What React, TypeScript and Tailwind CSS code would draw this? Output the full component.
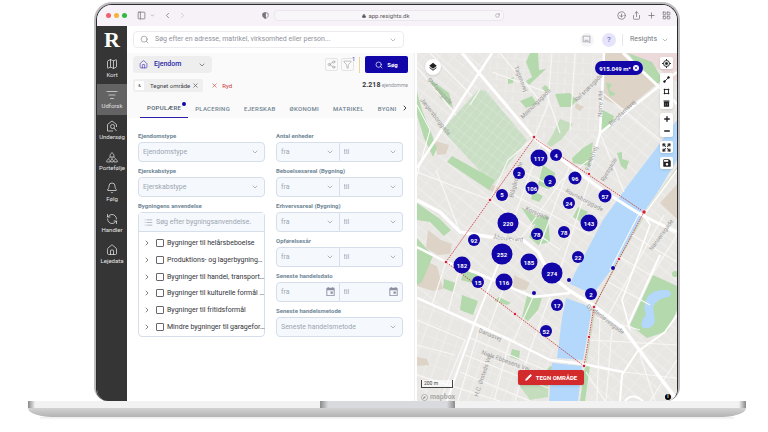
import type { ReactNode } from "react";
import {
  Bell, ChevronDown, ChevronLeft, ChevronRight, CircleArrowDown, Expand, Funnel, House, LayoutGrid, List,
  ListFilter, Lock, Map, Minus, PanelLeft, Pencil, Plus,
  RefreshCcw, RotateCw, Search, Share, Share2, X,
} from "lucide-react";

const FindHouseIcon = () => (
  <svg viewBox="0 0 24 24" className="size-3" fill="none" stroke="currentColor" strokeWidth="1.500">
    <path d="M21 14V9l-9-7-9 7v13h11" />
    <circle cx="13" cy="13" r="4" />
    <path d="M16 16l5 6" />
  </svg>
);

const PortfolioIcon = () => (
  <svg viewBox="0 0 24 24" className="size-3" fill="none" stroke="currentColor" strokeWidth="1.300">
    <path d="M8 8l4-5 4 5v4H8zM12 12v4M9 12l-4 3M15 12l4 3" />
    <path d="M1.500 22v-3L5 16l3 3v3zM9.500 22v-3l2.500-3 2.500 3v3zM16 22v-3l3-3 3.500 3v3z" />
  </svg>
);

const thin = { className: "size-3", strokeWidth: 1.5 };

const navItems = [
  { label: "Kort", icon: <Map {...thin} /> },
  { label: "Udforsk", icon: <ListFilter {...thin} />, active: true },
  { label: "Undersøg", icon: <FindHouseIcon /> },
  { label: "Portefølje", icon: <PortfolioIcon /> },
  { label: "Følg", icon: <Bell {...thin} /> },
  { label: "Handler", icon: <RefreshCcw {...thin} /> },
  { label: "Lejedata", icon: <House {...thin} /> },
];

const tabs = ["POPULÆRE", "PLACERING", "EJERSKAB", "ØKONOMI", "MATRIKEL", "BYGNI"];

const ranges = ["Antal enheder", "Beboelsesareal (Bygning)", "Erhvervsareal (Bygning)", "Opførelsesår"];

const usages = [
  "Bygninger til helårsbeboelse",
  "Produktions- og lagerbygning…",
  "Bygninger til handel, transport…",
  "Bygninger til kulturelle formål …",
  "Bygninger til fritidsformål",
  "Mindre bygninger til garagefor…",
];

// x, y in map units (260 x 348), diameter, count
const clusters: [number, number, number, string][] = [
  [122, 105, 17, "117"], [139, 102, 12, "4"], [102, 120, 12, "2"], [133, 128, 12, "2"],
  [158, 125, 13, "96"], [115, 135, 13, "106"], [85, 142, 12, "5"], [188, 143, 13, "57"],
  [152, 150, 12, "24"], [91, 170, 21, "220"], [172, 170, 17, "143"], [57, 187, 12, "92"],
  [120, 181, 12, "78"], [147, 179, 12, "78"], [85, 201, 21, "252"], [112, 209, 17, "185"],
  [45, 212, 17, "182"], [161, 204, 12, "22"], [135, 220, 21, "274"], [61, 229, 12, "15"],
  [87, 229, 17, "116"], [140, 252, 12, "17"], [174, 241, 12, "2"], [129, 278, 12, "52"],
  [152, 227, 4, ""], [117, 240, 4, ""], [196, 215, 4, ""],
];

const Label = ({ id, children }: { id: string; children: string }) => (
  <label htmlFor={id} className="mb-px block text-[6px] font-bold leading-[10px] text-[#6f8797]">{children}</label>
);

const Drop = ({ id, text, label, className = "" }: { id: string; text: string; label?: string; className?: string }) => (
  <div className="relative flex-1">
    <select id={id} aria-label={label} className={`block h-5 w-full appearance-none border border-[#d5dee9] bg-[#f5f9fd] px-1 text-[7px] text-[#9ca5b1] ${className}`}>
      <option>{text}</option>
    </select>
    <ChevronDown className="pointer-events-none absolute right-1.5 top-1.5 size-2 text-[#8795a5]" />
  </div>
);

const CalendarIcon = () => (
  <svg viewBox="0 0 24 24" className="pointer-events-none absolute right-1 top-1 size-[11px]" fill="#8b8fa0">
    <path d="M19 4h-1V2h-2v2H8V2H6v2H5a2 2 0 0 0-2 2v14a2 2 0 0 0 2 2h14a2 2 0 0 0 2-2V6a2 2 0 0 0-2-2zm0 16H5V9h14zM12 12h5v5h-5z" />
  </svg>
);

const DateBox = ({ id, text, label, className = "" }: { id: string; text: string; label?: string; className?: string }) => (
  <div className="relative flex-1">
    <input id={id} aria-label={label} placeholder={text} className={`block h-5 w-full border border-[#d5dee9] bg-[#f5f9fd] px-1 text-[7px] placeholder:text-[#9ca5b1] ${className}`} />
    <CalendarIcon />
  </div>
);

const BrowserBar = () => (
  <div className="flex h-[21px] items-center bg-[#f6f2f8] pl-[9px] pr-1.5 text-[#77727b]">
    <div className="flex flex-1 items-center">
      <div className="flex gap-[3px]">
        <span className="size-[5px] rounded-full bg-[#f0626a]" />
        <span className="size-[5px] rounded-full bg-[#f2b53b]" />
        <span className="size-[5px] rounded-full bg-[#31b943]" />
      </div>
      <PanelLeft className="ml-2.5 size-[9px]" />
      <ChevronDown className="ml-1 size-[5px]" />
      <ChevronLeft className="ml-2 size-[9px]" />
      <ChevronRight className="ml-1.5 size-[9px] opacity-40" />
      <svg viewBox="0 0 24 24" className="ml-auto mr-[5px] size-[7px]" fill="none" stroke="currentColor" strokeWidth="2.500">
        <path d="M12 2l9 3v7c0 5-4 8-9 10-5-2-9-5-9-10V5z" />
        <path d="M12 2v20c-5-2-9-5-9-10V5z" fill="currentColor" />
      </svg>
    </div>
    <div className="flex h-[11px] w-[230px] items-center rounded-sm border border-[#ebe6ed] bg-[#f9f6fa] px-[3px]">
      <p className="flex flex-1 items-center justify-center gap-0.5 text-[6px] text-[#5b5660]">
        <Lock className="size-1" fill="currentColor" />
        app.resights.dk
      </p>
      <RotateCw className="size-[5px]" />
    </div>
    <div className="flex flex-1 justify-end gap-1.5">
      <CircleArrowDown className="size-[9px]" />
      <Share className="size-[9px]" />
      <Plus className="size-[9px]" />
      <LayoutGrid className="size-[9px]" />
    </div>
  </div>
);

const Sidebar = () => (
  <nav className="w-[30px] shrink-0 bg-[#353535] text-white">
    <div className="flex h-[27px] items-center justify-center font-['Liberation_Serif'] text-[22px] font-bold">R</div>
    {navItems.map((item) => (
      <a
        key={item.label}
        href="#"
        className={`flex h-[31px] flex-col items-center pt-[5px] text-[6px] leading-[10px] ${item.active ? "bg-[#636363] text-[#e0e0e0]" : "text-[#e6e6e6]"}`}
      >
        {item.icon}
        {item.label}
      </a>
    ))}
  </nav>
);

const TopBar = () => (
  <header className="flex h-[27px] items-center bg-white pl-1.5 pr-2">
    <label className="flex h-[17px] w-[271px] items-center rounded-sm border border-[#ececee] px-1.5">
      <Search className="size-[9px] text-[#74747c]" strokeWidth={1.5} />
      <input aria-label="Søg" placeholder="Søg efter en adresse, matrikel, virksomhed eller person..." className="ml-1.5 flex-1 text-[7px] outline-none placeholder:text-[#8f939c]" />
      <ChevronDown className="size-2 text-[#9b9ba3]" />
    </label>
    <button className="ml-auto flex size-3.5 items-center justify-center rounded-full bg-[#f5f5f7] text-[#9696a2]" aria-label="Beskeder">
      <svg viewBox="0 0 24 24" className="size-[9px]" fill="none" stroke="currentColor" strokeWidth="2">
        <path d="M3 3h18v18l-3-3H3zM7 14h10" />
      </svg>
    </button>
    <button className="ml-2 flex size-3.5 items-center justify-center rounded-full bg-[#e6e4fb] text-[8px] text-[#5a53b8]">?</button>
    <span className="ml-1.5 h-3 w-px bg-[#e8e8ea]" />
    <button className="ml-[7px] flex items-center gap-1 text-[7px] text-[#77777f]">
      Resights
      <ChevronDown className="size-2 text-[#9b9ba3]" />
    </button>
  </header>
);

const FilterHead = () => (
  <div className="h-[65px] bg-[#fafafb] px-1.5 pt-[3px]">
    <div className="flex h-[17px] items-center">
      <button className="flex h-[17px] w-[79px] items-center rounded-sm bg-[#eeeeef] px-1.5 text-[7px] font-medium text-[#2a1fa8]">
        <House className="mr-1.5 size-[9px]" strokeWidth={1.5} />
        Ejendom
        <ChevronDown className="ml-auto size-2 text-[#555]" />
      </button>
      <button aria-label="Del" className="ml-auto flex size-[13px] items-center justify-center rounded-xs border border-[#e4e4e6] text-[#96969c]">
        <Share2 className="size-[9px]" strokeWidth={1.5} />
      </button>
      <button aria-label="Filtre" className="relative ml-[3px] flex size-[13px] items-center justify-center rounded-xs border border-[#e4e4e6] text-[#96969c]">
        <Funnel className="size-[9px]" strokeWidth={1.5} />
        <span className="absolute -right-0.5 -top-0.5 text-[5px] leading-[5px] text-[#3a30b0]">1</span>
      </button>
      <span className="mx-[5px] h-4 w-px bg-[#f0d590]" />
      <button className="flex h-[17px] w-[43px] items-center justify-center gap-1 rounded-xs bg-[#1206a9] text-[6px] font-bold text-white">
        <Search className="size-2" />
        Søg
      </button>
    </div>
    <div className="mt-1.5 flex h-[13px] items-center text-[6px]">
      <button className="flex h-[13px] items-center rounded-xs bg-[#efeff0] px-0.5 text-[#44444a]">
        <span className="mr-1.5 flex size-[9px] items-center justify-center bg-white text-[4px]">&amp;</span>
        Tegnet område
        <X className="mx-0.5 size-[7px]" />
      </button>
      <button className="ml-2 flex items-center gap-1 text-[#cc3333]">
        <X className="size-[7px]" />
        Ryd
      </button>
      <p className="ml-auto text-[5px] text-[#90909a]">
        <b className="text-[7px] text-[#36363c]">2.218</b> ejendomme
      </p>
    </div>
    <div role="tablist" className="mt-1.5 flex h-5 items-center gap-3.5 pl-3.5 text-[6px] font-medium tracking-wider text-[#71838f]">
      {tabs.map((tab, i) =>
        i === 0 ? (
          <button key={tab} role="tab" aria-selected className="relative -mx-[7px] h-5 border-b border-[#2a1fa8] px-[7px] text-[#4f5f6b]">
            {tab}
            <span className="absolute right-0.5 top-1 size-1 rounded-full bg-[#1206a9]" />
          </button>
        ) : (
          <button key={tab} role="tab" aria-selected={false}>{tab}</button>
        )
      )}
      <ChevronRight className="-ml-2.5 size-2 shrink-0 text-[#444]" strokeWidth={3} />
    </div>
  </div>
);

const FilterForm = () => (
  <form className="grid grid-cols-2 gap-x-[11px] px-[11px] pb-4 pt-[13px]">
    <div className="flex flex-col gap-1">
      <div>
        <Label id="type">Ejendomstype</Label>
        <Drop id="type" text="Ejendomstype" className="rounded-sm" />
      </div>
      <div>
        <Label id="owner">Ejerskabstype</Label>
        <Drop id="owner" text="Ejerskabstype" className="rounded-sm" />
      </div>
      <div className="flex flex-1 flex-col">
        <Label id="usage">Bygningens anvendelse</Label>
        <div className="flex flex-1 flex-col rounded-sm border border-[#d5dee9]">
          <div className="flex h-[19px] items-center border-b border-[#d5dee9] bg-[#f5f9fd] px-[5px]">
            <List className="size-[9px] shrink-0 text-[#9ca5b1]" />
            <input id="usage" placeholder="Søg efter bygningsanvendelse." className="ml-[3px] min-w-0 flex-1 text-[7px] placeholder:text-[#9ca5b1]" />
          </div>
          <ul className="flex flex-1 flex-col pb-px pl-1 pt-[3px]">
            {usages.map((usage) => (
              <li key={usage} className="flex flex-1 items-center">
                <ChevronRight className="size-2 shrink-0 text-[#444]" />
                <label className="flex items-center whitespace-nowrap pl-[5px] text-[7px] leading-[10px] text-[#333338]">
                  <input type="checkbox" className="mr-[3px] size-2 shrink-0 appearance-none rounded-[1px] border border-[#66666c]" />
                  {usage}
                </label>
              </li>
            ))}
          </ul>
        </div>
      </div>
    </div>
    <div className="flex flex-col gap-1">
      {ranges.map((name, i) => (
        <div key={name}>
          <Label id={`range${i}`}>{name}</Label>
          <div className="flex">
            <Drop id={`range${i}`} text="fra" className="rounded-l-sm" />
            <Drop id={`to${i}`} label={`${name} til`} text="til" className="rounded-r-sm border-l-0" />
          </div>
        </div>
      ))}
      <div>
        <Label id="date">Seneste handelsdato</Label>
        <div className="flex">
          <DateBox id="date" text="fra" className="rounded-l-sm" />
          <DateBox id="dateTo" label="Seneste handelsdato til" text="til" className="rounded-r-sm border-l-0" />
        </div>
      </div>
      <div>
        <Label id="method">Seneste handelsmetode</Label>
        <Drop id="method" text="Seneste handelsmetode" className="rounded-sm" />
      </div>
    </div>
  </form>
);

const MapDrawing = () => (
  <svg viewBox="417 53 260 348" preserveAspectRatio="none" className="absolute inset-0 size-full">
    <defs>
      <pattern id="blocks" width="19" height="12" patternUnits="userSpaceOnUse" patternTransform="rotate(-50)">
        <path d="M0 0H19M0 0V12M11 0V12" fill="none" stroke="#f3f2f0" strokeWidth="0.900" />
      </pattern>
      <pattern id="blocksNorth" width="17" height="11" patternUnits="userSpaceOnUse" patternTransform="rotate(4)">
        <path d="M0 0H17M0 0V11M8 5V11" fill="none" stroke="#f3f2f0" strokeWidth="0.900" />
      </pattern>
      <pattern id="blocksSouth" width="21" height="13" patternUnits="userSpaceOnUse" patternTransform="rotate(20)">
        <path d="M0 0H21M0 0V13M9 0V13" fill="none" stroke="#f3f2f0" strokeWidth="0.900" />
      </pattern>
      <pattern id="paths" width="9" height="7" patternUnits="userSpaceOnUse" patternTransform="rotate(-52)">
        <path d="M0 0H9M0 0V7" fill="none" stroke="#e2eede" strokeWidth="0.700" />
      </pattern>
    </defs>
    <rect x="417" y="53" width="260" height="348" fill="#e9e7e4" />
    <rect x="417" y="53" width="260" height="348" fill="url(#blocks)" />
    <path d="M492 53H604L600 133L534 138L485 72z" fill="#e9e7e4" />
    <path d="M492 53H604L600 133L534 138L485 72z" fill="url(#blocksNorth)" />
    <path d="M417 298L583 363L578 401H417z" fill="#e9e7e4" />
    <path d="M417 298L583 363L578 401H417z" fill="url(#blocksSouth)" />

    {/* built-up grounds */}
    <g fill="#ddd3c6">
      <path d="M605 53L622 53L658 83L634 103L627 110L604 99z" />
      <path d="M435 141L449 145L446 154L437 155z" />
      <path d="M490 184L500 188L496 193L488 190z" />
      <path d="M677 184V219L660 203z" />
      <path d="M418 258L437 266L443 289L433 291L417 286z" />
      <path d="M428 230L441 240L452 244L450 254L438 255L426 248z" />
      <path d="M514 275L530 283L526 290L513 289z" />
      <path d="M417 357L427 359L429 365L417 366z" />
      <path d="M576 103L584 107L580 111L575 108z" />
    </g>
    <path d="M623 53H677V82L660 70z" fill="#ecd9da" />

    {/* parks */}
    <path d="M442 130L479 89L486 91L527 140L493 185z" fill="#c9dec4" />
    <path d="M442 130L479 89L486 91L527 140L493 185z" fill="url(#paths)" />
    <g fill="#b4d9ad">
      <path d="M452 156L495 180L489 190L447 162z" />
      <path d="M417 92L422 110L430 130L437 148L433 157L424 138L417 115z" />
      <path d="M429 80L434 82L449 93L453 108L441 99z" />
      <path d="M530 53H538L539 70L546 69L529 85L526 81L532 77L526 62z" />
      <path d="M520 101L532 96L537 104L526 108z" />
      <path d="M545 85L549 88L546 93L542 88z" />
      <path d="M555 94L570 93L577 101L570 107L560 107z" />
      <path d="M508 79L514 77L513 83L508 84z" />
      <path d="M603 110L614 116L611 127L600 133z" />
      <path d="M606 83L612 84L609 90L616 94L610 97z" />
      <path d="M628 53L652 62L663 80L657 84L640 70z" />
      <path d="M593 142L590 166L573 163L572 158L583 148z" />
      <path d="M560 119L573 124L562 139L551 147L547 144L553 134z" opacity="0.700" />
      <path d="M617 153L622 152L622 159L629 161L626 170L621 166z" />
      <path d="M543 165L555 173L553 187L548 189L538 185z" />
      <path d="M533 191L543 196L539 202L531 199z" />
      <path d="M578 207L588 212L581 222L573 217z" />
      <path d="M539 217L548 216L550 242L538 245L529 237z" />
      <path d="M521 207L542 220L533 225z" />
      <path d="M417 203L440 219L451 230L444 236L430 222L417 220z" />
      <path d="M417 238L433 256L427 270L422 282L417 285z" />
      <path d="M464 270L478 275L475 284L461 280z" />
      <path d="M462 295L478 301L473 315L460 310z" />
      <path d="M444 279L456 283L453 292L443 288z" />
      <path d="M527 296L542 298L538 310L528 321L522 317z" />
      <path d="M499 297L511 303L507 305L494 301z" />
      <path d="M512 349L520 351L519 360L510 357z" />
      <path d="M574 369L550 375L552 382L544 386L540 380L550 366z" />
      <path d="M585 366H590L585 401H580z" />
      <path d="M519 385L548 381V397L530 400z" opacity="0.700" />
      <path d="M653 275L677 286V310L668 331L647 338L630 325z" />
      <circle cx="675" cy="274" r="3" />
    </g>

    {/* lakes */}
    <g fill="#b3d8fb">
      <path d="M677 120V160L657 193L644 212L617 262L596 290L588 292L570 284L575 273L603 220L626 188L655 150z" />
      <path d="M566 298L588 306L591 314L583 360L557 358L562 318z" />
      <path d="M552 363L582 366L578 401H549z" />
      <path d="M648 296Q654 289 667 290Q674 292 669 297Q658 297 653 307L655 322Q650 331 642 327Q640 321 646 315Q642 306 648 296z" />
    </g>
    <path d="M680 164L646 212L619 259L596 303L586 363" fill="none" stroke="#cbdcbf" strokeWidth="1.500" />

    {/* minor streets */}
    <g fill="none" stroke="#f8f7f5" strokeWidth="1.200">
      <path d="M417 67L456 115M430 53L472 96M470 105L480 89M492 72L546 92L560 133" />
      <path d="M552 53L548 104L534 138M575 53L570 130M500 53L540 101M604 94L660 140M600 133L624 192" />
      <path d="M417 172L490 200L560 250M436 170L460 232M490 200L508 160L534 138M520 240L562 180L589 160" />
      <path d="M540 145L510 230M570 165L540 245M590 178L560 270M505 190L590 235M520 170L600 210" />
      <path d="M446 262L432 305M460 267L448 312M505 285L488 330M533 297L513 342M550 297L530 350" />
      <path d="M417 320L465 340L440 401M417 345L455 355M480 326L458 401M510 340L494 401M530 350L515 401" />
      <path d="M417 375L500 401M470 338L550 372M465 355L548 388M460 372L530 401" />
      <path d="M640 212L677 235M632 235L677 262M620 257L650 275M608 282L650 305M597 318L640 330" />
      <path d="M640 212L610 270M664 215L630 275L606 320M677 235L652 275M590 340L677 345M586 372L605 401M600 318L597 401M612 330L606 401M623 372L677 378M640 355L655 401M677 360L650 401" />
    </g>

    {/* main roads */}
    <g fill="none" stroke="#fff" strokeLinejoin="round">
      <path d="M492 53L417 168" strokeWidth="2.500" />
      <path d="M462 53L534 138L553 153L605 192L643 216L677 232" strokeWidth="3" />
      <path d="M604 53L600 133L590 168" strokeWidth="2.500" />
      <path d="M677 72L600 133" strokeWidth="2.500" />
      <path d="M623 53L677 104" strokeWidth="3" />
      <path d="M417 200L440 212L460 232L490 237L523 240L538 252L550 275L570 291L593 305L623 328L643 355L677 400" strokeWidth="3.500" />
      <path d="M417 247L446 262L477 273L533 297L570 293" strokeWidth="2.500" />
      <path d="M417 298L473 323L510 340L550 360L583 364L623 372" strokeWidth="2.500" />
      <path d="M500 260L475 322L447 401" strokeWidth="2" />
      <path d="M417 175L430 130L417 105" strokeWidth="1" />
      <path d="M677 170L644 215L650 225L622 300L630 330" strokeWidth="1.500" />
      <path d="M660 255L628 325M620 401L622 375L637 352L665 332L677 315M625 401Q632 392 643 401" strokeWidth="2" />
    </g>

    <g fontFamily="Roboto, sans-serif" fontSize="6" fill="#999">
      <text transform="translate(420 100) rotate(52)">Jægersborggade</text>
      <text transform="translate(427 80) rotate(47)">Stefansgade</text>
      <text transform="translate(514 67) rotate(68)">Tagensvej</text>
      <text transform="translate(523 119) rotate(-45)">Meinungsgade</text>
      <text transform="translate(577 102) rotate(-45)">Refsnæsgade</text>
      <text transform="translate(602 117) rotate(-88)">Nørre Allé</text>
      <text transform="translate(611 126) rotate(-43)">Blegdamsvej</text>
      <text transform="translate(589 171) rotate(-70)">Fælledvej</text>
      <text transform="translate(604 182) rotate(-60)">Ryesgade</text>
      <text transform="translate(565 192) rotate(28)">Ravnsborggade</text>
      <text transform="translate(513 198) rotate(-75)">Blågårdsgade</text>
      <text transform="translate(493 239) rotate(5)">Åboulevard</text>
      <text transform="translate(525 210) rotate(24)">Korsgade</text>
      <text transform="translate(478 332) rotate(22)">Danasvej</text>
      <text transform="translate(481 354) rotate(20)">Niels Ebbesens Vej</text>
      <text transform="translate(478 397) rotate(-72)">H.C. Ørsteds Vej</text>
      <text transform="translate(586 307) rotate(37)">Gyldenløvesgade</text>
      <text transform="translate(652 251) rotate(-54)">Nansensgade</text>
    </g>

    <path d="M534 138L644 212L619 259L594 307L589 337L584 366L446 262L490 200z" fill="none" stroke="#cf3b46" strokeWidth="0.900" strokeDasharray="1.500 1" />
    <g fill="#cf2436" stroke="#fff" strokeWidth="0.800">
      <circle cx="534" cy="137" r="1.800" />
      <circle cx="589" cy="174" r="1.800" />
      <circle cx="644" cy="212" r="2.200" />
      <circle cx="619" cy="259" r="1.800" />
      <circle cx="594" cy="307" r="1.800" />
      <circle cx="589" cy="337" r="1.800" />
      <circle cx="584" cy="366" r="1.800" />
      <circle cx="515" cy="314" r="1.800" />
      <circle cx="446" cy="262" r="1.800" />
      <circle cx="490" cy="200" r="1.800" />
    </g>
  </svg>
);

const MapButton = ({ label, children }: { label: string; children: ReactNode }) => (
  <button aria-label={label} className="flex h-3 w-[13px] items-center justify-center">{children}</button>
);

const MapView = () => (
  <section className="relative ml-0.5 flex-1 overflow-hidden bg-[#e9e7e4]">
    <MapDrawing />
    {clusters.map(([x, y, size, count], i) => (
      <span
        key={i}
        className="absolute flex -translate-x-1/2 -translate-y-1/2 items-center justify-center rounded-full bg-[#1206a9] text-[6px] font-bold text-white"
        style={{ left: `${(x / 260) * 100}%`, top: `${(y / 348) * 100}%`, width: size, height: size }}
      >
        {count}
      </span>
    ))}
    <button aria-label="Kortlag" className="absolute left-2 top-1.5 flex size-4 items-center justify-center rounded-full bg-white shadow-sm">
      <svg viewBox="0 0 24 24" className="size-2.5" fill="#222">
        <path d="M12 16l9-7-9-7-9 7zM12 18.500l-7.400-5.700L3 14l9 7 9-7-1.600-1.200z" />
      </svg>
    </button>
    <div className="absolute right-[34px] top-2 flex h-3.5 w-12 items-center justify-center gap-0.5 rounded-full bg-[#1206a9] text-[6px] font-bold text-white">
      915.049 m²
      <button aria-label="Fjern" className="flex size-1.5 items-center justify-center rounded-full bg-white text-[#1206a9]">
        <X className="size-1" strokeWidth={4} />
      </button>
    </div>
    <div className="absolute right-1 top-1 flex flex-col gap-1 text-[#222] *:rounded-xs *:bg-white *:shadow-sm">
      <div>
        <MapButton label="Find mig">
          <svg viewBox="0 0 24 24" className="size-[9px]" fill="none" stroke="#222" strokeWidth="2.500"><circle cx="12" cy="12" r="8" /><circle cx="12" cy="12" r="3" fill="#222" /><path d="M12 0v4M12 20v4M0 12h4M20 12h4" /></svg>
        </MapButton>
      </div>
      <div>
        <MapButton label="Linje">
          <svg viewBox="0 0 24 24" className="size-[7px]" fill="#222" stroke="#222" strokeWidth="3"><circle cx="5" cy="19" r="3" /><circle cx="19" cy="5" r="3" /><path d="M5 19L19 5" /></svg>
        </MapButton>
        <MapButton label="Areal">
          <svg viewBox="0 0 24 24" className="size-[7px]" fill="#222" stroke="#222" strokeWidth="3"><path d="M5 5h14v14H5z" fill="none" /><path d="M4 4h3v3H4zM17 4h3v3h-3zM4 17h3v3H4zM17 17h3v3h-3z" /></svg>
        </MapButton>
        <MapButton label="Slet">
          <svg viewBox="0 0 24 24" className="size-[7px]" fill="none" stroke="#222" strokeWidth="4"><path d="M2 4h20M5 9h14v12H5zM10 11v8M14 11v8" /></svg>
        </MapButton>
      </div>
      <div>
        <MapButton label="Zoom ind"><Plus className="size-2" strokeWidth={4} /></MapButton>
        <MapButton label="Zoom ud"><Minus className="size-2" strokeWidth={4} /></MapButton>
      </div>
      <div><MapButton label="Fuld skærm"><Expand className="size-[9px]" strokeWidth={3} /></MapButton></div>
      <div>
        <MapButton label="Gem">
          <svg viewBox="0 0 24 24" className="size-2.5" fill="#222">
            <path fillRule="evenodd" d="M17 3H5a2 2 0 0 0-2 2v14a2 2 0 0 0 2 2h14a2 2 0 0 0 2-2V7zM5 5h10v4H5zM12 12a3 3 0 1 1 0 6 3 3 0 0 1 0-6z" />
          </svg>
        </MapButton>
      </div>
    </div>
    <div className="absolute bottom-[13px] left-1 h-2 w-8 border border-t-0 border-[#444] bg-white/60 pl-0.5 text-[5px] leading-[7px] text-[#444]">200 m</div>
    <div className="absolute bottom-0 left-1 flex items-center gap-0.5 text-[7px] font-bold leading-[8px] text-[#a9a9a9]">
      <svg viewBox="0 0 24 24" className="size-[7px]"><circle cx="12" cy="12" r="10" fill="#fff" stroke="#999" strokeWidth="3" /><path d="M7 17c-1-6 3-10 7-9 5 3 1 10-7 9z" fill="#999" /></svg>
      mapbox
    </div>
    <button className="absolute bottom-4 left-[101px] flex h-[15px] w-[66px] items-center justify-center gap-1 rounded-xs bg-[#d32a2c] text-[6px] font-bold text-white shadow-sm">
      <Pencil className="size-[7px]" fill="currentColor" />
      TEGN OMRÅDE
    </button>
    <button aria-label="Info" className="absolute bottom-px right-1.5 flex size-1.5 items-center justify-center rounded-full bg-black text-[5px] font-bold text-white">i</button>
  </section>
);

export default function App() {
  return (
    <div className="flex min-h-screen flex-col overflow-hidden bg-white pb-3 pl-7 pr-[22px] pt-0.5 font-[Roboto,sans-serif]">
      <div className="mx-[66px] flex flex-1 flex-col rounded-b-[14px] rounded-t-[18px] border-2 border-b-0 border-[#bdbcbe]">
        <div className="flex flex-1 flex-col overflow-hidden rounded-b-[12px] rounded-t-[16px] border border-b-0 border-[#2c2a2e]">
          <BrowserBar />
          <div className="flex flex-1">
            <Sidebar />
            <div className="flex min-w-0 flex-1 flex-col">
              <TopBar />
              <div className="flex flex-1">
                <aside className="w-[288px] shrink-0 border-r border-[#f0f0f2]">
                  <FilterHead />
                  <FilterForm />
                </aside>
                <MapView />
              </div>
            </div>
          </div>
        </div>
      </div>
      {/* laptop base */}
      <div>
        <div className="flex h-[7px] justify-center bg-[linear-gradient(90deg,#888,#f2f2f2_1%,#f2f2f2_99%,#888)]">
          <div className="h-[7px] w-[135px] bg-[linear-gradient(90deg,#8a8a8a,#d9dade_6%,#d9dade_94%,#8a8a8a)]" />
        </div>
        <div className="h-[9px] bg-linear-to-b from-[#d2d2d2] to-[#b4b3b4] [border-radius:0_0_24px_24px/0_0_9px_9px]" />
        <div className="mx-3 h-[3px] bg-linear-to-b from-[#ececec] to-white" />
      </div>
    </div>
  );
}
